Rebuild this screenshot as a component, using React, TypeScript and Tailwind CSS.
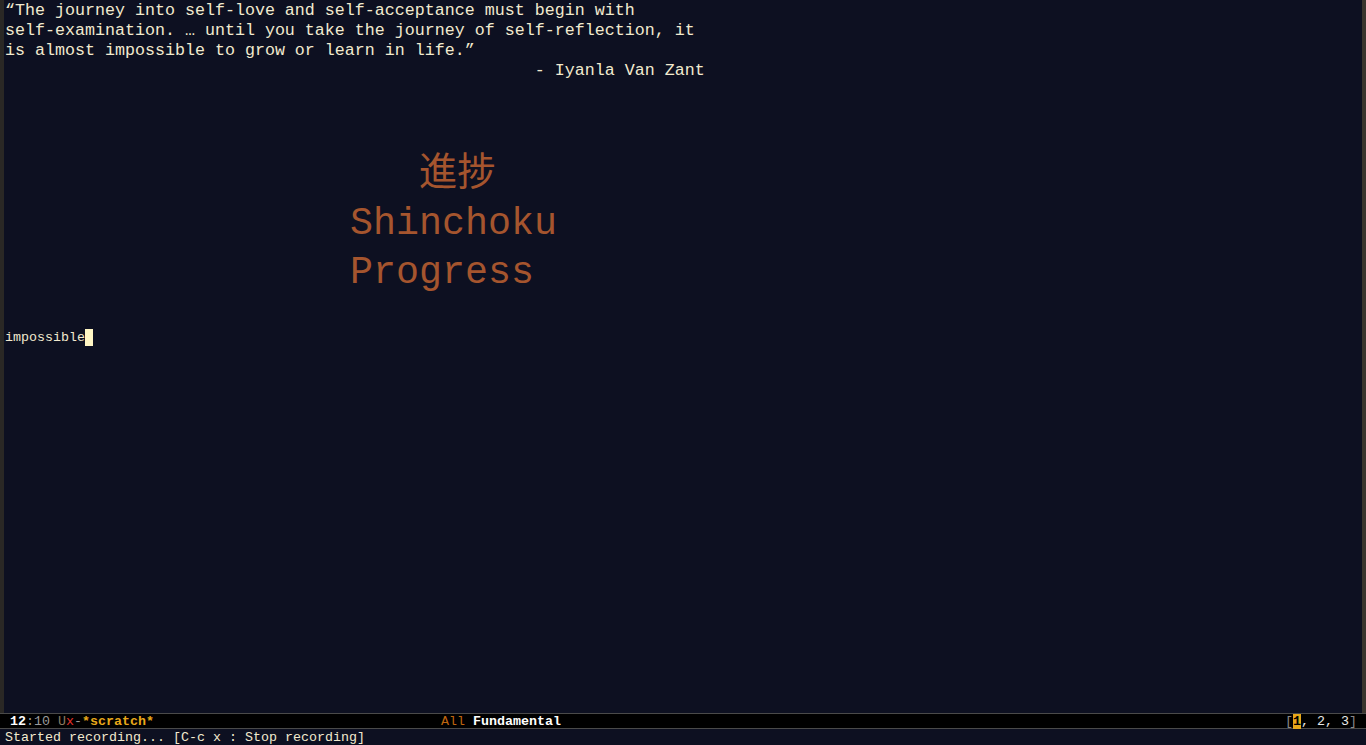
export default function App() {
  const mono = "font-['Liberation_Mono','Noto_Sans_CJK_JP',monospace]";

  return (
    <div className={`flex h-[745px] w-[1366px] flex-col overflow-hidden bg-[#0d1021] ${mono}`}>
      {/* buffer window */}
      <div className="flex min-h-0 flex-1">
        <div className="w-[4px] bg-[#2a2825]" />
        <div className="flex-1 pl-[1px] pt-[1px] text-[#f2eacf]">
          <div className="whitespace-pre text-[16.67px] leading-[20px]">
            <div>“The journey into self-love and self-acceptance must begin with</div>
            <div>self-examination. … until you take the journey of self-reflection, it</div>
            <div>is almost impossible to grow or learn in life.”</div>
            <div>{"                                                     - Iyanla Van Zant"}</div>
          </div>

          <div className="mt-[70px] whitespace-pre pl-[345px] text-[38.33px] leading-[49px] text-[#a5552e]">
            <div>{"   進捗"}</div>
            <div>Shinchoku</div>
            <div>Progress</div>
          </div>

          <div className="mt-[31px] flex items-center text-[13.33px] leading-[17px]">
            <span>impossible</span>
            <span className="h-[17px] w-[8px] bg-[#fff6c4]" />
          </div>
        </div>
        <div className="w-[4px] bg-[#0d1021]" />
        <div className="w-[4px] bg-[#3a352e]" />
      </div>

      {/* mode line */}
      <div className="flex h-[16px] items-center border-y border-[#4a4a4a] bg-black pr-[9px] pt-[2px] text-[13.33px] leading-[14px]">
        <div className="whitespace-pre pl-[2px]">
          <span> </span>
          <span className="font-bold text-white">12</span>
          <span className="text-[#9a9a9a]">:10 </span>
          <span className="text-[#8a7a60]">U</span>
          <span className="text-[#e0302a]">x</span>
          <span className="text-[#9a9a9a]">-</span>
          <span className="font-bold text-[#e8a81a]">*scratch*</span>
        </div>
        <div className="ml-[287px] whitespace-pre">
          <span className="text-[#c0660e]">All</span>
          <span> </span>
          <span className="font-bold text-white">Fundamental</span>
        </div>
        <div className="ml-auto whitespace-pre text-[#e8e8e8]">
          <span className="text-[#888]">[</span>
          <span className="bg-[#e8a81a] font-bold text-black">1</span>
          <span>, 2, 3</span>
          <span className="text-[#888]">]</span>
        </div>
      </div>

      {/* echo area */}
      <div className="h-[16px] whitespace-pre pl-[5px] pt-[1px] text-[13.33px] leading-[16px] text-[#f2eacf]">
        Started recording... [C-c x : Stop recording]
      </div>
    </div>
  );
}
